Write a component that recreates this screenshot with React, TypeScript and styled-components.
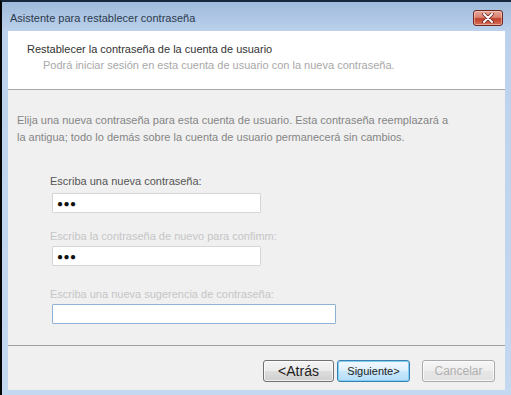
import React from "react";
import styled, { createGlobalStyle } from "styled-components";

const Global = createGlobalStyle`
  html, body { margin: 0; padding: 0; background: #000; }
  body { font-family: "Liberation Sans", Arial, sans-serif; }
`;

const Window = styled.div`
  width: 511px;
  height: 395px;
  box-sizing: border-box;
  border-top: 2px solid #16263b;
  border-left: 2px solid #050505;
  background: linear-gradient(180deg, #9fbadb 0px, #bcd2ec 30px, #c4d8f0 100%);
  display: flex;
  flex-direction: column;
`;

const TitleBar = styled.div`
  height: 29px;
  display: flex;
  align-items: center;
  justify-content: space-between;
  padding: 0 8px 3px 8px;
  box-sizing: border-box;
`;

const Title = styled.span`
  font-size: 11px;
  color: #2b3a4c;
  padding-top: 6px;
`;

const Close = styled.button`
  width: 30px;
  height: 16px;
  margin-top: 6px;
  border: 1px solid #6e2a20;
  border-radius: 3px;
  background: linear-gradient(180deg, #e9a89a 0%, #d98272 45%, #c0402b 55%, #d5705a 100%);
  display: flex;
  align-items: center;
  justify-content: center;
  padding: 0;
  box-shadow: inset 0 0 0 1px rgba(255, 220, 210, 0.5);
`;

const Content = styled.div`
  flex: 1;
  margin: 0 6px 5px 6px;
  background: #f0f0f0;
  display: flex;
  flex-direction: column;
`;

const Header = styled.div`
  height: 59px;
  background: #ffffff;
  border-bottom: 1px solid #a8a8a8;
  padding: 11px 0 0 19px;
  box-sizing: border-box;
`;

const HeaderTitle = styled.div`
  font-size: 11px;
  line-height: 14px;
  color: #333;
`;

const HeaderSub = styled.div`
  font-size: 11px;
  line-height: 14px;
  color: #a8a8a8;
  margin: 2px 0 0 16px;
`;

const Body = styled.div`
  flex: 1;
  padding: 22px 0 0 9px;
  box-sizing: border-box;
  border-bottom: 1px solid #a0a0a0;
`;

const Paragraph = styled.p`
  margin: 0;
  font-size: 11px;
  line-height: 17px;
  color: #858585;
`;

const Form = styled.div`
  margin: 28px 0 0 33px;
  display: flex;
  flex-direction: column;
`;

const Label = styled.label<{ $dim?: boolean; $top: number }>`
  font-size: 11px;
  line-height: 14px;
  color: ${(p) => (p.$dim ? "#c6c6c6" : "#555")};
  margin-top: ${(p) => p.$top}px;
`;

const Field = styled.div<{ $wide?: boolean; $focus?: boolean; $gap: number }>`
  width: ${(p) => (p.$wide ? "284px" : "209px")};
  height: 20px;
  box-sizing: border-box;
  margin: ${(p) => p.$gap}px 0 0 2px;
  background: #fff;
  border: 1px solid ${(p) => (p.$focus ? "#8fb3d6" : "#d6d6d6")};
  border-radius: 1px;
  display: flex;
  align-items: center;
  padding-left: 4px;
  font-size: 10px;
  letter-spacing: 0.5px;
  color: #111;
`;

const Footer = styled.div`
  height: 44px;
  display: flex;
  justify-content: flex-end;
  align-items: flex-start;
  padding: 14px 10px 0 0;
  box-sizing: border-box;
  gap: 3px;
`;

const Button = styled.button<{ $variant?: "primary" | "disabled"; $size: number; $w: number; $ml?: number }>`
  width: ${(p) => p.$w}px;
  height: 22px;
  margin-left: ${(p) => p.$ml ?? 0}px;
  box-sizing: border-box;
  border-radius: 3px;
  font-family: "Liberation Sans", Arial, sans-serif;
  font-size: ${(p) => p.$size}px;
  padding: 0;
  border: 1px solid
    ${(p) => (p.$variant === "primary" ? "#3c7fb1" : p.$variant === "disabled" ? "#a7abae" : "#707070")};
  color: ${(p) => (p.$variant === "disabled" ? "#b0b0b0" : "#222")};
  background: ${(p) =>
    p.$variant === "primary"
      ? "linear-gradient(180deg, #f2f9fe 0%, #dcf0fc 50%, #c8e7fb 51%, #b6def9 100%)"
      : p.$variant === "disabled"
      ? "linear-gradient(180deg, #f6f6f6 0%, #eeeeee 50%, #e6e6e6 51%, #e2e2e2 100%)"
      : "linear-gradient(180deg, #f4f4f4 0%, #ebebeb 50%, #dddddd 51%, #cfcfcf 100%)"};
  box-shadow: ${(p) =>
    p.$variant === "primary" ? "inset 0 0 0 1px #7fd0f5" : "inset 0 0 0 1px rgba(255,255,255,0.7)"};
`;

export default function App() {
  return (
    <>
      <Global />
      <Window>
        <TitleBar>
          <Title>Asistente para restablecer contraseña</Title>
          <Close aria-label="Cerrar">
            <svg width="12" height="10" viewBox="0 0 12 10">
              <path d="M2 1 L10 9 M10 1 L2 9" stroke="#5a1a12" strokeWidth="3.4" strokeLinecap="round" />
              <path d="M2 1 L10 9 M10 1 L2 9" stroke="#ffffff" strokeWidth="2" strokeLinecap="round" />
            </svg>
          </Close>
        </TitleBar>
        <Content>
          <Header>
            <HeaderTitle>Restablecer la contraseña de la cuenta de usuario</HeaderTitle>
            <HeaderSub>Podrá iniciar sesión en esta cuenta de usuario con la nueva contraseña.</HeaderSub>
          </Header>
          <Body>
            <Paragraph>
              Elija una nueva contraseña para esta cuenta de usuario. Esta contraseña reemplazará a
              <br />
              la antigua; todo lo demás sobre la cuenta de usuario permanecerá sin cambios.
            </Paragraph>
            <Form>
              <Label $top={0}>Escriba una nueva contraseña:</Label>
              <Field $gap={5}>●●●</Field>
              <Label $dim $top={16}>Escriba la contraseña de nuevo para confimm:</Label>
              <Field $gap={3}>●●●</Field>
              <Label $dim $top={21}>Escriba una nueva sugerencia de contraseña:</Label>
              <Field $wide $focus $gap={3}></Field>
            </Form>
          </Body>
          <Footer>
            <Button $w={71} $size={14}>&lt;Atrás</Button>
            <Button $w={73} $variant="primary" $size={11}>Siguiente&gt;</Button>
            <Button $w={73} $variant="disabled" $size={12} $ml={9}>Cancelar</Button>
          </Footer>
        </Content>
      </Window>
    </>
  );
}
